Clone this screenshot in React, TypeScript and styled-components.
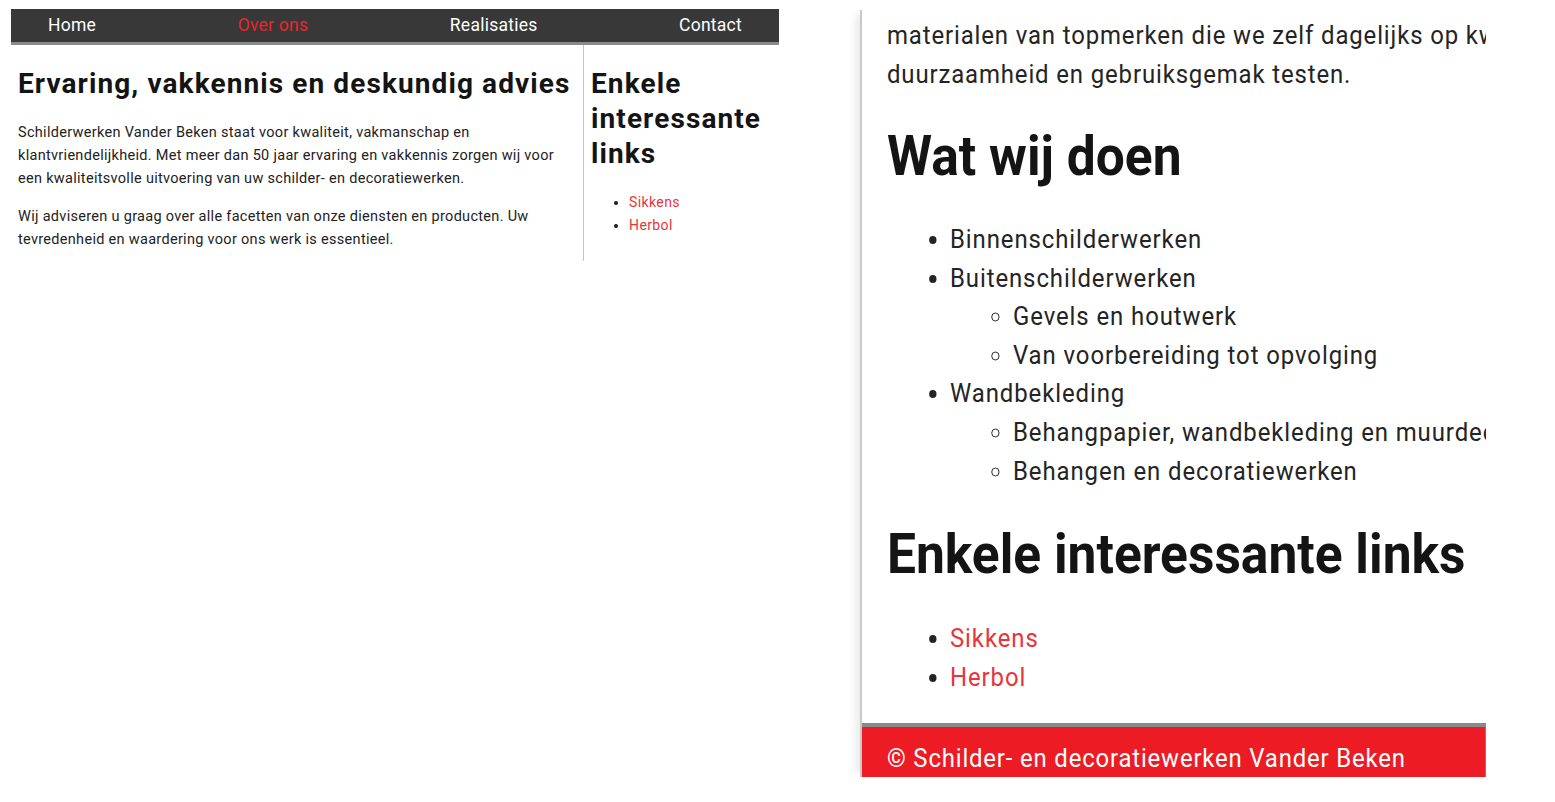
import React from "react";
import styled, { createGlobalStyle } from "styled-components";

const K = 0.92; // horizontal squeeze of the zoomed phone shot
const u = (v: number) => `${(v / K).toFixed(2)}px`;

const Global = createGlobalStyle`
  html, body { margin: 0; padding: 0; background: #fff; }
  body { font-family: Roboto, "Liberation Sans", Arial, sans-serif; color: #1b1b1b; }
  * { box-sizing: border-box; }
`;

const Page = styled.div`
  display: flex;
  align-items: flex-start;
  padding: 9px 0 0 11px;
  width: 1555px;
  height: 802px;
  overflow: hidden;
`;

/* ---------- desktop view ---------- */
const Site = styled.div`
  width: 768px;
  flex: none;
`;

const Nav = styled.nav`
  height: 36px;
  background: #383838;
  border-bottom: 3px solid #8a8a8a;
  display: flex;
  align-items: center;
  justify-content: space-between;
  padding: 0 37px 2px 37px;
`;

const NavLink = styled.a<{ $active?: boolean }>`
  font-size: 17.5px;
  letter-spacing: 0.25px;
  color: ${(p) => (p.$active ? "#e8262b" : "#ffffff")};
  text-decoration: none;
`;

const Columns = styled.div`
  display: flex;
`;

const Main = styled.main`
  width: 572px;
  padding: 21px 7px 10px 7px;
`;

const Aside = styled.aside`
  flex: 1;
  border-left: 1px solid #c4c4c4;
  padding: 21px 6px 10px 7px;
`;

const H1 = styled.h1<{ $wrap?: boolean }>`
  margin: 0;
  font-size: 28px;
  line-height: 35px;
  font-weight: 700;
  letter-spacing: 1.1px;
  color: #141414;
  white-space: ${(p) => (p.$wrap ? "normal" : "nowrap")};
`;

const P = styled.p<{ $mt: number }>`
  margin: ${(p) => p.$mt}px 0 0 0;
  font-size: 14.5px;
  line-height: 23px;
  letter-spacing: 0.3px;
  color: #222;
`;

const SideList = styled.ul`
  margin: 20px 0 0 0;
  padding-left: 38px;
  font-size: 14px;
  line-height: 23px;
  letter-spacing: 0.4px;
`;

const RedLink = styled.a`
  color: #e8343a;
  text-decoration: none;
`;

/* ---------- zoomed phone view ---------- */
const Phone = styled.div`
  margin: 1px 0 0 81px;
  width: 626px;
  height: 767px;
  flex: none;
  overflow: hidden;
  border-left: 2px solid #c9c9c9;
  box-shadow: -8px 0 8px -4px rgba(0, 0, 0, 0.09);
  clip-path: inset(0 0 0 -20px);
`;

const Squeeze = styled.div`
  width: ${u(624)};
  transform: scaleX(${K});
  transform-origin: left top;
  display: flex;
  flex-direction: column;
`;

const Body = styled.div`
  padding: 6px 0 0 ${u(25)};
`;

const BigP = styled.p`
  margin: 0;
  font-size: 26px;
  line-height: 38.5px;
  letter-spacing: 0.95px;
  color: #242424;
  white-space: nowrap;
`;

const H2 = styled.h2<{ $mt: number }>`
  margin: ${(p) => p.$mt}px 0 0 0;
  font-size: 56px;
  line-height: 67px;
  font-weight: 700;
  color: #141414;
  white-space: nowrap;
`;

const BigList = styled.ul<{ $mt?: number; $disc?: boolean }>`
  margin: ${(p) => p.$mt ?? 0}px 0 0 0;
  padding-left: ${u(63)};
  list-style: ${(p) => (p.$disc === false ? "circle" : "disc")};
  font-size: 26px;
  line-height: 38.6px;
  letter-spacing: 1px;
  color: #242424;
  white-space: nowrap;
`;

const Footer = styled.footer`
  margin-top: 27px;
  border-top: 4px solid #8a8a8a;
  background: #ed1c24;
  height: 60px;
  padding: 12px 0 0 ${u(25)};
  font-size: 26px;
  line-height: 39px;
  letter-spacing: 0.9px;
  color: #fff;
  white-space: nowrap;
`;

export default function App() {
  return (
    <>
      <Global />
      <Page>
        <Site>
          <Nav>
            <NavLink href="#">Home</NavLink>
            <NavLink href="#" $active>
              Over ons
            </NavLink>
            <NavLink href="#">Realisaties</NavLink>
            <NavLink href="#">Contact</NavLink>
          </Nav>
          <Columns>
            <Main>
              <H1>Ervaring, vakkennis en deskundig advies</H1>
              <P $mt={19.5}>
                Schilderwerken Vander Beken staat voor kwaliteit, vakmanschap en
                klantvriendelijkheid. Met meer dan 50 jaar ervaring en vakkennis
                zorgen wij voor een kwaliteitsvolle uitvoering van uw schilder- en
                decoratiewerken.
              </P>
              <P $mt={15}>
                Wij adviseren u graag over alle facetten van onze diensten en
                producten. Uw tevredenheid en waardering voor ons werk is
                essentieel.
              </P>
            </Main>
            <Aside>
              <H1 as="h2" $wrap>
                Enkele interessante links
              </H1>
              <SideList>
                <li>
                  <RedLink href="#">Sikkens</RedLink>
                </li>
                <li>
                  <RedLink href="#">Herbol</RedLink>
                </li>
              </SideList>
            </Aside>
          </Columns>
        </Site>

        <Phone>
          <Squeeze>
            <Body>
              <BigP>
                materialen van topmerken die we zelf dagelijks op kwaliteit,
                <br />
                duurzaamheid en gebruiksgemak testen.
              </BigP>
              <H2 $mt={30}>Wat wij doen</H2>
              <BigList $mt={30}>
                <li>Binnenschilderwerken</li>
                <li>
                  Buitenschilderwerken
                  <BigList $disc={false}>
                    <li>Gevels en houtwerk</li>
                    <li>Van voorbereiding tot opvolging</li>
                  </BigList>
                </li>
                <li>
                  Wandbekleding
                  <BigList $disc={false}>
                    <li>Behangpapier, wandbekleding en muurdecoratie</li>
                    <li>Behangen en decoratiewerken</li>
                  </BigList>
                </li>
              </BigList>
              <H2 $mt={31}>Enkele interessante links</H2>
              <BigList $mt={31}>
                <li>
                  <RedLink href="#">Sikkens</RedLink>
                </li>
                <li>
                  <RedLink href="#">Herbol</RedLink>
                </li>
              </BigList>
            </Body>
            <Footer>© Schilder- en decoratiewerken Vander Beken</Footer>
          </Squeeze>
        </Phone>
      </Page>
    </>
  );
}
